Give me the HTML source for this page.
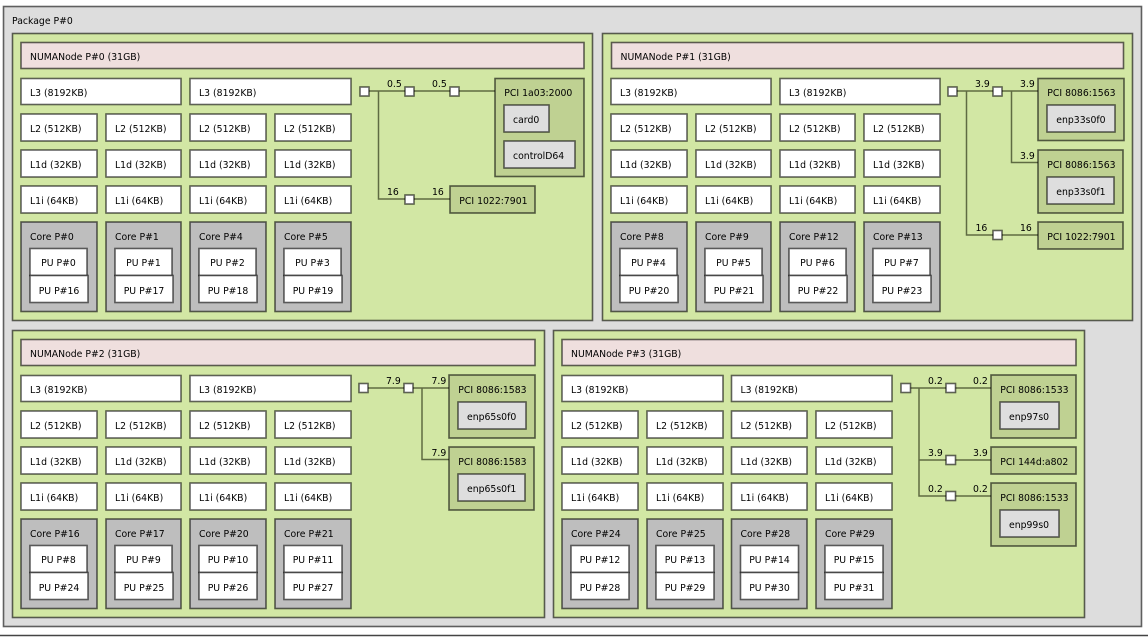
<!DOCTYPE html>
<html><head><meta charset="utf-8"><style>
html,body{margin:0;padding:0;background:#fff;width:1148px;height:639px;overflow:hidden}
svg{display:block}
text{font-family:"DejaVu Sans",sans-serif;font-size:9.3px;fill:#000}
rect{stroke:#000;stroke-opacity:.6;stroke-width:1.6}
.pk{fill:#dddddd}.g{fill:#d2e7a4}.n{fill:#efdfde}.w{fill:#fff}.c{fill:#bebebe}.p{fill:#bfd192}.d{fill:#dedede}
path{fill:none;stroke:#5f6b42;stroke-width:1.5}
.m{text-anchor:middle}
</style></head><body>
<svg width="1148" height="639" viewBox="0 0 1148 639" xmlns="http://www.w3.org/2000/svg">
<rect class="pk" x="3.5" y="6.5" width="1138" height="620"/>
<path d="M0 635.5H1148" style="stroke:#444"/>
<text x="12" y="24">Package P#0</text>

<rect class="g" x="12.5" y="33.5" width="580" height="287"/>
<rect class="g" x="602.5" y="33.5" width="530" height="287"/>
<rect class="g" x="12.5" y="330.5" width="532" height="287"/>
<rect class="g" x="553.5" y="330.5" width="531" height="287"/>

<!-- NUMA 0 -->
<rect class="n" x="21" y="42.5" width="563" height="26"/><text x="30" y="60">NUMANode P#0 (31GB)</text>
<rect class="w" x="21" y="78.5" width="160" height="26"/><text x="30" y="96">L3 (8192KB)</text>
<rect class="w" x="190" y="78.5" width="161" height="26"/><text x="199" y="96">L3 (8192KB)</text>
<rect class="w" x="21" y="114" width="76" height="27"/><text x="30" y="132">L2 (512KB)</text>
<rect class="w" x="106" y="114" width="75" height="27"/><text x="115" y="132">L2 (512KB)</text>
<rect class="w" x="190" y="114" width="76" height="27"/><text x="199" y="132">L2 (512KB)</text>
<rect class="w" x="275" y="114" width="76" height="27"/><text x="284" y="132">L2 (512KB)</text>
<rect class="w" x="21" y="150" width="76" height="27"/><text x="30" y="168">L1d (32KB)</text>
<rect class="w" x="106" y="150" width="75" height="27"/><text x="115" y="168">L1d (32KB)</text>
<rect class="w" x="190" y="150" width="76" height="27"/><text x="199" y="168">L1d (32KB)</text>
<rect class="w" x="275" y="150" width="76" height="27"/><text x="284" y="168">L1d (32KB)</text>
<rect class="w" x="21" y="186" width="76" height="27"/><text x="30" y="204">L1i (64KB)</text>
<rect class="w" x="106" y="186" width="75" height="27"/><text x="115" y="204">L1i (64KB)</text>
<rect class="w" x="190" y="186" width="76" height="27"/><text x="199" y="204">L1i (64KB)</text>
<rect class="w" x="275" y="186" width="76" height="27"/><text x="284" y="204">L1i (64KB)</text>
<rect class="c" x="21" y="222" width="76" height="89.5"/><text x="30" y="240">Core P#0</text>
<rect class="w" x="30" y="248.5" width="57" height="27"/><text class="m" x="58.5" y="266">PU P#0</text>
<rect class="w" x="30" y="275.5" width="58" height="27"/><text class="m" x="59" y="294">PU P#16</text>
<rect class="c" x="106" y="222" width="75" height="89.5"/><text x="115" y="240">Core P#1</text>
<rect class="w" x="115" y="248.5" width="57" height="27"/><text class="m" x="143.5" y="266">PU P#1</text>
<rect class="w" x="115" y="275.5" width="58" height="27"/><text class="m" x="144" y="294">PU P#17</text>
<rect class="c" x="190" y="222" width="76" height="89.5"/><text x="199" y="240">Core P#4</text>
<rect class="w" x="199" y="248.5" width="57" height="27"/><text class="m" x="227.5" y="266">PU P#2</text>
<rect class="w" x="199" y="275.5" width="58" height="27"/><text class="m" x="228" y="294">PU P#18</text>
<rect class="c" x="275" y="222" width="76" height="89.5"/><text x="284" y="240">Core P#5</text>
<rect class="w" x="284" y="248.5" width="57" height="27"/><text class="m" x="312.5" y="266">PU P#3</text>
<rect class="w" x="284" y="275.5" width="58" height="27"/><text class="m" x="313" y="294">PU P#19</text>
<path d="M365 91H495M378.5 91V199H450"/>
<rect class="w" x="360" y="87" width="9" height="9"/>
<rect class="w" x="405" y="87" width="9" height="9"/>
<rect class="w" x="450" y="87" width="9" height="9"/>
<rect class="w" x="405" y="195" width="9" height="9"/>
<text x="387" y="87">0.5</text><text x="432" y="87">0.5</text><text x="387" y="195">16</text><text x="432" y="195">16</text>
<rect class="p" x="495" y="78.5" width="89" height="98"/><text x="504.3" y="96">PCI 1a03:2000</text>
<rect class="d" x="504" y="105" width="45" height="27"/><text x="513" y="123">card0</text>
<rect class="d" x="504" y="141" width="71" height="27"/><text x="513" y="159">controlD64</text>
<rect class="p" x="450" y="186" width="85" height="27"/><text x="459.3" y="204">PCI 1022:7901</text>

<!-- NUMA 1 -->
<rect class="n" x="611.5" y="42.5" width="512" height="26"/><text x="620.5" y="60">NUMANode P#1 (31GB)</text>
<rect class="w" x="611" y="78.5" width="160" height="26"/><text x="620" y="96">L3 (8192KB)</text>
<rect class="w" x="780" y="78.5" width="160" height="26"/><text x="789" y="96">L3 (8192KB)</text>
<rect class="w" x="611" y="114" width="76" height="27"/><text x="620" y="132">L2 (512KB)</text>
<rect class="w" x="696" y="114" width="75" height="27"/><text x="705" y="132">L2 (512KB)</text>
<rect class="w" x="780" y="114" width="75" height="27"/><text x="789" y="132">L2 (512KB)</text>
<rect class="w" x="864" y="114" width="76" height="27"/><text x="873" y="132">L2 (512KB)</text>
<rect class="w" x="611" y="150" width="76" height="27"/><text x="620" y="168">L1d (32KB)</text>
<rect class="w" x="696" y="150" width="75" height="27"/><text x="705" y="168">L1d (32KB)</text>
<rect class="w" x="780" y="150" width="75" height="27"/><text x="789" y="168">L1d (32KB)</text>
<rect class="w" x="864" y="150" width="76" height="27"/><text x="873" y="168">L1d (32KB)</text>
<rect class="w" x="611" y="186" width="76" height="27"/><text x="620" y="204">L1i (64KB)</text>
<rect class="w" x="696" y="186" width="75" height="27"/><text x="705" y="204">L1i (64KB)</text>
<rect class="w" x="780" y="186" width="75" height="27"/><text x="789" y="204">L1i (64KB)</text>
<rect class="w" x="864" y="186" width="76" height="27"/><text x="873" y="204">L1i (64KB)</text>
<rect class="c" x="611" y="222" width="76" height="89.5"/><text x="620" y="240">Core P#8</text>
<rect class="w" x="620" y="248.5" width="57" height="27"/><text class="m" x="648.5" y="266">PU P#4</text>
<rect class="w" x="620" y="275.5" width="58" height="27"/><text class="m" x="649" y="294">PU P#20</text>
<rect class="c" x="696" y="222" width="75" height="89.5"/><text x="705" y="240">Core P#9</text>
<rect class="w" x="705" y="248.5" width="57" height="27"/><text class="m" x="733.5" y="266">PU P#5</text>
<rect class="w" x="705" y="275.5" width="58" height="27"/><text class="m" x="734" y="294">PU P#21</text>
<rect class="c" x="780" y="222" width="75" height="89.5"/><text x="789" y="240">Core P#12</text>
<rect class="w" x="789" y="248.5" width="57" height="27"/><text class="m" x="817.5" y="266">PU P#6</text>
<rect class="w" x="789" y="275.5" width="58" height="27"/><text class="m" x="818" y="294">PU P#22</text>
<rect class="c" x="864" y="222" width="76" height="89.5"/><text x="873" y="240">Core P#13</text>
<rect class="w" x="873" y="248.5" width="57" height="27"/><text class="m" x="901.5" y="266">PU P#7</text>
<rect class="w" x="873" y="275.5" width="58" height="27"/><text class="m" x="902" y="294">PU P#23</text>
<path d="M953 91H1038M966.5 91V235H1038M1011.5 91V162.5H1038"/>
<rect class="w" x="948" y="87" width="9" height="9"/>
<rect class="w" x="993" y="87" width="9" height="9"/>
<rect class="w" x="993" y="230.5" width="9" height="9"/>
<text x="975" y="87">3.9</text><text x="1020" y="87">3.9</text><text x="1020" y="159">3.9</text><text x="975.5" y="231">16</text><text x="1020" y="231">16</text>
<rect class="p" x="1038" y="78.5" width="86" height="62"/><text x="1047.3" y="96">PCI 8086:1563</text>
<rect class="d" x="1047" y="105" width="68" height="27"/><text x="1056.3" y="123">enp33s0f0</text>
<rect class="p" x="1038" y="150" width="85" height="63"/><text x="1047.3" y="168">PCI 8086:1563</text>
<rect class="d" x="1047" y="177" width="67" height="27"/><text x="1056.3" y="195">enp33s0f1</text>
<rect class="p" x="1038" y="222" width="85" height="27"/><text x="1047.3" y="240">PCI 1022:7901</text>

<!-- NUMA 2 -->
<rect class="n" x="21" y="339.5" width="514" height="26"/><text x="30" y="357">NUMANode P#2 (31GB)</text>
<rect class="w" x="21" y="375.5" width="160" height="26"/><text x="30" y="393">L3 (8192KB)</text>
<rect class="w" x="190" y="375.5" width="161" height="26"/><text x="199" y="393">L3 (8192KB)</text>
<rect class="w" x="21" y="411" width="76" height="27"/><text x="30" y="429">L2 (512KB)</text>
<rect class="w" x="106" y="411" width="75" height="27"/><text x="115" y="429">L2 (512KB)</text>
<rect class="w" x="190" y="411" width="76" height="27"/><text x="199" y="429">L2 (512KB)</text>
<rect class="w" x="275" y="411" width="76" height="27"/><text x="284" y="429">L2 (512KB)</text>
<rect class="w" x="21" y="447" width="76" height="27"/><text x="30" y="465">L1d (32KB)</text>
<rect class="w" x="106" y="447" width="75" height="27"/><text x="115" y="465">L1d (32KB)</text>
<rect class="w" x="190" y="447" width="76" height="27"/><text x="199" y="465">L1d (32KB)</text>
<rect class="w" x="275" y="447" width="76" height="27"/><text x="284" y="465">L1d (32KB)</text>
<rect class="w" x="21" y="483" width="76" height="27"/><text x="30" y="501">L1i (64KB)</text>
<rect class="w" x="106" y="483" width="75" height="27"/><text x="115" y="501">L1i (64KB)</text>
<rect class="w" x="190" y="483" width="76" height="27"/><text x="199" y="501">L1i (64KB)</text>
<rect class="w" x="275" y="483" width="76" height="27"/><text x="284" y="501">L1i (64KB)</text>
<rect class="c" x="21" y="519" width="76" height="89.5"/><text x="30" y="537">Core P#16</text>
<rect class="w" x="30" y="545.5" width="57" height="27"/><text class="m" x="58.5" y="563">PU P#8</text>
<rect class="w" x="30" y="572.5" width="58" height="27"/><text class="m" x="59" y="591">PU P#24</text>
<rect class="c" x="106" y="519" width="75" height="89.5"/><text x="115" y="537">Core P#17</text>
<rect class="w" x="115" y="545.5" width="57" height="27"/><text class="m" x="143.5" y="563">PU P#9</text>
<rect class="w" x="115" y="572.5" width="58" height="27"/><text class="m" x="144" y="591">PU P#25</text>
<rect class="c" x="190" y="519" width="76" height="89.5"/><text x="199" y="537">Core P#20</text>
<rect class="w" x="199" y="545.5" width="58" height="27"/><text class="m" x="228" y="563">PU P#10</text>
<rect class="w" x="199" y="572.5" width="58" height="27"/><text class="m" x="228" y="591">PU P#26</text>
<rect class="c" x="275" y="519" width="76" height="89.5"/><text x="284" y="537">Core P#21</text>
<rect class="w" x="284" y="545.5" width="58" height="27"/><text class="m" x="313" y="563">PU P#11</text>
<rect class="w" x="284" y="572.5" width="58" height="27"/><text class="m" x="313" y="591">PU P#27</text>
<path d="M363 388H449M422 388V459.5H449"/>
<rect class="w" x="359" y="383.5" width="9" height="9"/>
<rect class="w" x="404" y="383.5" width="9" height="9"/>
<text x="386" y="384">7.9</text><text x="431.5" y="384">7.9</text><text x="431.5" y="456">7.9</text>
<rect class="p" x="449" y="375" width="86" height="63"/><text x="458.3" y="393">PCI 8086:1583</text>
<rect class="d" x="458" y="402" width="68" height="27"/><text x="467" y="420">enp65s0f0</text>
<rect class="p" x="449" y="447" width="85" height="63"/><text x="458.3" y="465">PCI 8086:1583</text>
<rect class="d" x="458" y="474" width="67" height="27"/><text x="467" y="492">enp65s0f1</text>

<!-- NUMA 3 -->
<rect class="n" x="562" y="339.5" width="514" height="26"/><text x="571" y="357">NUMANode P#3 (31GB)</text>
<rect class="w" x="562" y="375.5" width="161" height="26"/><text x="571" y="393">L3 (8192KB)</text>
<rect class="w" x="731.5" y="375.5" width="160.5" height="26"/><text x="740.5" y="393">L3 (8192KB)</text>
<rect class="w" x="562" y="411" width="76" height="27"/><text x="571" y="429">L2 (512KB)</text>
<rect class="w" x="647" y="411" width="76" height="27"/><text x="656" y="429">L2 (512KB)</text>
<rect class="w" x="731.5" y="411" width="75.5" height="27"/><text x="740.5" y="429">L2 (512KB)</text>
<rect class="w" x="816" y="411" width="76" height="27"/><text x="825" y="429">L2 (512KB)</text>
<rect class="w" x="562" y="447" width="76" height="27"/><text x="571" y="465">L1d (32KB)</text>
<rect class="w" x="647" y="447" width="76" height="27"/><text x="656" y="465">L1d (32KB)</text>
<rect class="w" x="731.5" y="447" width="75.5" height="27"/><text x="740.5" y="465">L1d (32KB)</text>
<rect class="w" x="816" y="447" width="76" height="27"/><text x="825" y="465">L1d (32KB)</text>
<rect class="w" x="562" y="483" width="76" height="27"/><text x="571" y="501">L1i (64KB)</text>
<rect class="w" x="647" y="483" width="76" height="27"/><text x="656" y="501">L1i (64KB)</text>
<rect class="w" x="731.5" y="483" width="75.5" height="27"/><text x="740.5" y="501">L1i (64KB)</text>
<rect class="w" x="816" y="483" width="76" height="27"/><text x="825" y="501">L1i (64KB)</text>
<rect class="c" x="562" y="519" width="76" height="89.5"/><text x="571" y="537">Core P#24</text>
<rect class="w" x="571" y="545.5" width="58" height="27"/><text class="m" x="600" y="563">PU P#12</text>
<rect class="w" x="571" y="572.5" width="58" height="27"/><text class="m" x="600" y="591">PU P#28</text>
<rect class="c" x="647" y="519" width="76" height="89.5"/><text x="656" y="537">Core P#25</text>
<rect class="w" x="656" y="545.5" width="58" height="27"/><text class="m" x="685" y="563">PU P#13</text>
<rect class="w" x="656" y="572.5" width="58" height="27"/><text class="m" x="685" y="591">PU P#29</text>
<rect class="c" x="731.5" y="519" width="75.5" height="89.5"/><text x="740.5" y="537">Core P#28</text>
<rect class="w" x="740.5" y="545.5" width="58" height="27"/><text class="m" x="769.5" y="563">PU P#14</text>
<rect class="w" x="740.5" y="572.5" width="58" height="27"/><text class="m" x="769.5" y="591">PU P#30</text>
<rect class="c" x="816" y="519" width="76" height="89.5"/><text x="825" y="537">Core P#29</text>
<rect class="w" x="825" y="545.5" width="58" height="27"/><text class="m" x="854" y="563">PU P#15</text>
<rect class="w" x="825" y="572.5" width="58" height="27"/><text class="m" x="854" y="591">PU P#31</text>
<path d="M906 388H991M919 388V496H991M919 460H991"/>
<rect class="w" x="901" y="383.5" width="9.5" height="9"/>
<rect class="w" x="946" y="383.5" width="9.5" height="9"/>
<rect class="w" x="946" y="455.5" width="9.5" height="9"/>
<rect class="w" x="946" y="491.5" width="9.5" height="9"/>
<text x="928" y="384">0.2</text><text x="973" y="384">0.2</text>
<text x="928" y="456">3.9</text><text x="973" y="456">3.9</text>
<text x="928" y="492">0.2</text><text x="973" y="492">0.2</text>
<rect class="p" x="991" y="375" width="85" height="63"/><text x="1000.3" y="393">PCI 8086:1533</text>
<rect class="d" x="1000" y="402" width="59" height="27"/><text x="1009" y="420">enp97s0</text>
<rect class="p" x="991" y="447" width="85" height="27"/><text x="1000.3" y="465">PCI 144d:a802</text>
<rect class="p" x="991" y="483" width="85" height="63"/><text x="1000.3" y="501">PCI 8086:1533</text>
<rect class="d" x="1000" y="510" width="59" height="27"/><text x="1009" y="528">enp99s0</text>
</svg>
</body></html>
